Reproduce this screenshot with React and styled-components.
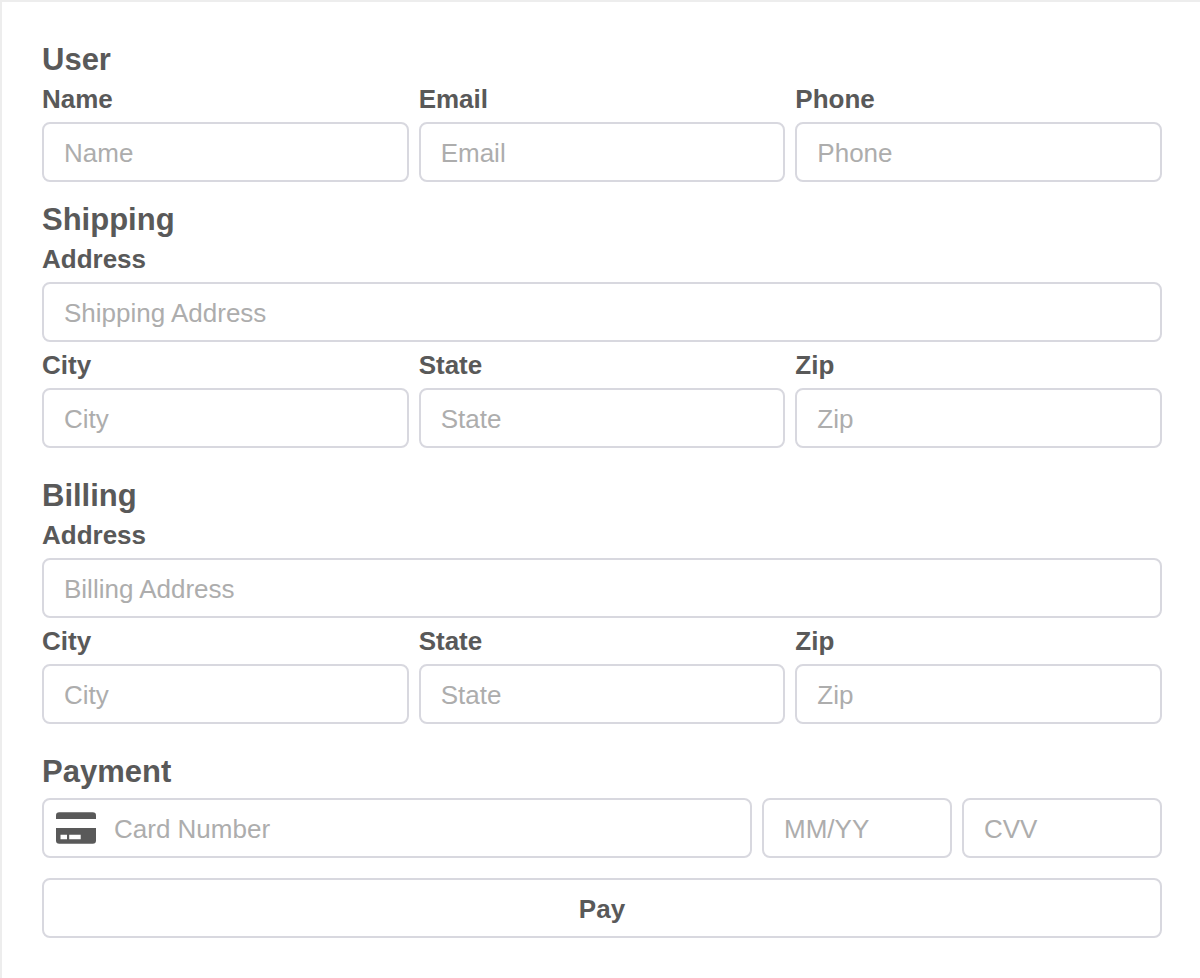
import React from 'react';
import styled, { createGlobalStyle } from 'styled-components';

const Global = createGlobalStyle`
  *, *::before, *::after { box-sizing: border-box; }
  body {
    margin: 0;
    background: #fff;
    color: #595959;
    font-family: "Liberation Sans", Arial, Helvetica, sans-serif;
  }
`;

const Form = styled.form`
  min-height: 100vh;
  padding: 38px 38px 40px 40px;
  border-top: 2px solid #ededed;
  border-left: 2px solid #ededed;
`;

const Section = styled.section`
  margin-bottom: ${(p) => p.$gap}px;
`;

const Title = styled.h2`
  margin: 0;
  font-size: 31px;
  line-height: 40px;
  font-weight: 700;
`;

const Row = styled.div`
  display: grid;
  grid-template-columns: ${(p) => p.$columns};
  gap: 10px;
  margin-bottom: 4px;
`;

const FieldLabel = styled.label`
  display: grid;
  gap: 4px;
  min-width: 0;
  font-size: 26px;
  line-height: 38px;
  font-weight: 700;
`;

const Input = styled.input`
  display: block;
  width: 100%;
  height: 60px;
  margin: 0;
  padding: 2px 20px 0;
  border: 2px solid #d8d8df;
  border-radius: 8px;
  background: #fff;
  color: #595959;
  font: inherit;
  font-weight: 400;
  font-size: 26px;
  outline: none;
  &::placeholder { color: #adadad; opacity: 1; }
  &:focus { border-color: #8c8c8c; }
`;

const PaymentRow = styled.div`
  display: grid;
  grid-template-columns: minmax(0, 1fr) 190px 200px;
  gap: 10px;
  margin-top: 6px;
`;

const CardField = styled.div`
  display: flex;
  align-items: center;
  height: 60px;
  padding-left: 12px;
  border: 2px solid #d8d8df;
  border-radius: 8px;
  &:focus-within { border-color: #8c8c8c; }
`;

const CardInput = styled(Input)`
  flex: 1;
  min-width: 0;
  height: 56px;
  padding: 2px 18px 0;
  border: 0;
`;

const CardSvg = styled.svg`
  display: block;
  flex: none;
`;

const PayButton = styled.button`
  display: block;
  width: 100%;
  height: 60px;
  margin-top: 20px;
  padding: 2px 20px 0;
  border: 2px solid #d8d8df;
  border-radius: 8px;
  background: #fff;
  color: #595959;
  font: inherit;
  font-size: 26px;
  font-weight: 700;
  cursor: pointer;
`;

const CardIcon = () => (
  <CardSvg width="40" height="32" viewBox="0 0 40 32" fill="#595959" aria-hidden="true">
    <path d="M3.3 0.2H36.7Q40 0.2 40 3.5V7H0V3.5Q0 0.2 3.3 0.2Z" />
    <path fillRule="evenodd" d="M0 16H40V28.5Q40 31.8 36.7 31.8H3.3Q0 31.8 0 28.5ZM4.5 22.7V27.3H11V22.7ZM13.2 22.7V27.3H24.7V22.7Z" />
  </CardSvg>
);

const Field = ({ label, placeholder = label, name }) => (
  <FieldLabel>
    {label}
    <Input name={name} placeholder={placeholder} />
  </FieldLabel>
);

const AddressSection = ({ title }) => {
  const prefix = title.toLowerCase();
  return (
    <Section $gap={28}>
      <Title>{title}</Title>
      <Row $columns="minmax(0, 1fr)">
        <Field label="Address" placeholder={`${title} Address`} name={`${prefix}-address`} />
      </Row>
      <Row $columns="repeat(3, minmax(0, 1fr))">
        <Field label="City" name={`${prefix}-city`} />
        <Field label="State" name={`${prefix}-state`} />
        <Field label="Zip" name={`${prefix}-zip`} />
      </Row>
    </Section>
  );
};

export default function App() {
  return (
    <>
      <Global />
      <Form onSubmit={(e) => e.preventDefault()}>
        <Section $gap={18}>
          <Title>User</Title>
          <Row $columns="repeat(3, minmax(0, 1fr))">
            <Field label="Name" name="name" />
            <Field label="Email" name="email" />
            <Field label="Phone" name="phone" />
          </Row>
        </Section>
        <AddressSection title="Shipping" />
        <AddressSection title="Billing" />
        <section>
          <Title>Payment</Title>
          <PaymentRow>
            <CardField>
              <CardIcon />
              <CardInput aria-label="Card number" placeholder="Card Number" />
            </CardField>
            <Input aria-label="Expiry date" placeholder="MM/YY" />
            <Input aria-label="Security code" placeholder="CVV" />
          </PaymentRow>
        </section>
        <PayButton type="submit">Pay</PayButton>
      </Form>
    </>
  );
}
